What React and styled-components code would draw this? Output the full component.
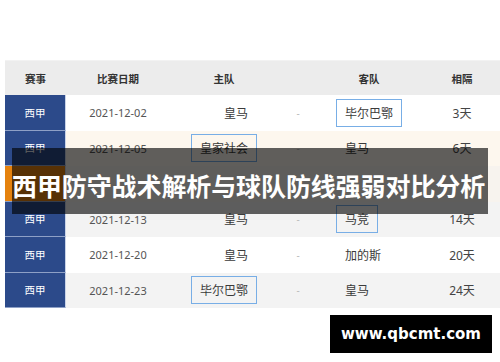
import styled, { createGlobalStyle } from 'styled-components';

const GlobalStyle = createGlobalStyle`
    html, body {
        margin: 0;
        padding: 0;
        background: #fff;
    }
    body {
        font-family: "Noto Sans", "Noto Sans CJK SC", sans-serif;
    }
`

const Page = styled.div`
    position: relative;
    width: 500px;
    height: 362px;
    overflow: hidden;
    padding: 60px 0 0 5px;
    box-sizing: border-box;
`
const Table = styled.div`
    width: 495px;
    display: flex;
    flex-direction: column;
`
const cols = '61px 104px 108px 40px 102px 80px';

const HeadRow = styled.div`
    display: grid;
    grid-template-columns: ${cols};
    height: 35px;
    background: #ececec;
    border-top: 1px solid #f2f2f2;
    box-sizing: border-box;
`
const HeadCell = styled.div`
    display: flex;
    align-items: center;
    justify-content: center;
    font-size: 10.5px;
    font-weight: 700;
    color: #333;
    padding-left: ${p => p.$shift || 0}px;
`
const Row = styled.div`
    display: grid;
    grid-template-columns: ${cols};
    height: 35.5px;
    background: ${p => p.$bg};
`
const League = styled.div`
    display: flex;
    align-items: center;
    justify-content: center;
    background: ${p => p.$active ? '#e5820e' : '#2c4a8a'};
    color: #fff;
    font-size: 10.5px;
    border-right: 1px solid #c9d3e8;
    border-bottom: 1px solid #8ea0c6;
    box-sizing: border-box;
`
const DateCell = styled.div`
    display: flex;
    align-items: center;
    justify-content: center;
    font-size: 11px;
    color: #555;
`
const HomeCell = styled.div`
    display: flex;
    align-items: center;
    justify-content: flex-end;
    padding-right: 21px;
`
const AwayCell = styled.div`
    display: flex;
    align-items: center;
    justify-content: flex-start;
    padding-left: 18px;
`
const Dash = styled.div`
    display: flex;
    align-items: center;
    justify-content: center;
    font-size: 10px;
    color: #bbb;
`
const Team = styled.span`
    display: flex;
    align-items: center;
    height: 28px;
    padding: 0 8px;
    box-sizing: border-box;
    font-size: 12px;
    color: #3a3a3a;
    border: 1px solid ${p => p.$boxed ? '#78aee6' : 'transparent'};
`
const Gap = styled.div`
    display: flex;
    align-items: center;
    justify-content: center;
    padding-left: 4px;
    font-size: 12px;
    color: #444;
`
const Banner = styled.div`
    position: absolute;
    left: 12px;
    top: 148px;
    width: 476px;
    height: 66px;
    background: rgba(0, 0, 0, 0.62);
    display: flex;
    align-items: center;
    padding-top: 8px;
    box-sizing: border-box;
`
const BannerTitle = styled.h1`
    margin: 0;
    color: #fff;
    font-family: "Noto Sans CJK SC", sans-serif;
    font-size: 25px;
    font-weight: 700;
    letter-spacing: -0.1px;
    white-space: nowrap;
`
const Mark = styled.div`
    position: absolute;
    left: 330px;
    top: 315px;
    width: 162px;
    height: 38px;
    background: #000;
    color: #fff;
    display: flex;
    align-items: center;
    justify-content: center;
    font-family: "DejaVu Sans", sans-serif;
    font-weight: 700;
    font-size: 15px;
`

const rows = [
    { league: '西甲', date: '2021-12-02', home: '皇马', away: '毕尔巴鄂', awayBox: true, gap: '3天', bg: '#fff' },
    { league: '西甲', date: '2021-12-05', home: '皇家社会', homeBox: true, away: '皇马', gap: '6天', bg: '#fdf7ee' },
    { active: true, bg: '#f7f3ee' },
    { league: '西甲', date: '2021-12-13', home: '皇马', away: '马竞', awayBox: true, gap: '14天', bg: '#f3f3f3' },
    { league: '西甲', date: '2021-12-20', home: '皇马', away: '加的斯', gap: '20天', bg: '#fff' },
    { league: '西甲', date: '2021-12-23', home: '毕尔巴鄂', homeBox: true, away: '皇马', gap: '24天', bg: '#f3f3f3' },
]

export default function App(){
    return(
        <Page>
            <GlobalStyle/>
            <Table>
                <HeadRow>
                    <HeadCell>赛事</HeadCell>
                    <HeadCell>比赛日期</HeadCell>
                    <HeadCell>主队</HeadCell>
                    <HeadCell></HeadCell>
                    <HeadCell>客队</HeadCell>
                    <HeadCell $shift={4}>相隔</HeadCell>
                </HeadRow>
                {rows.map((r, i) => (
                    <Row key={i} $bg={r.bg}>
                        <League $active={r.active}>{r.league}</League>
                        <DateCell>{r.date}</DateCell>
                        <HomeCell>{r.home && <Team $boxed={r.homeBox}>{r.home}</Team>}</HomeCell>
                        <Dash>{r.date && '-'}</Dash>
                        <AwayCell>{r.away && <Team $boxed={r.awayBox}>{r.away}</Team>}</AwayCell>
                        <Gap>{r.gap}</Gap>
                    </Row>
                ))}
            </Table>
            <Banner>
                <BannerTitle>西甲防守战术解析与球队防线强弱对比分析</BannerTitle>
            </Banner>
            <Mark>www.qbcmt.com</Mark>
        </Page>
    )
}
